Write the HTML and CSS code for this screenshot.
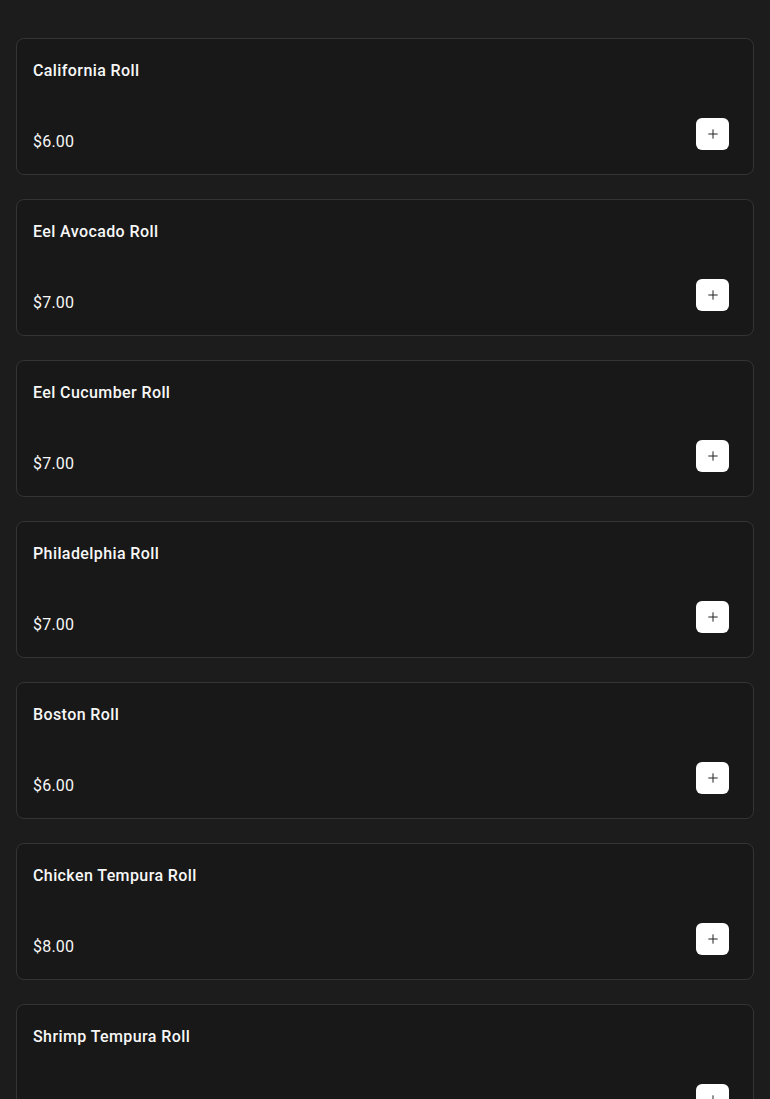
FILE: index.html
```html
<!DOCTYPE html>
<html lang="en">
<head>
  <meta charset="UTF-8" />
  <meta name="viewport" content="width=device-width, initial-scale=1.0" />
  <title>Menu</title>
  <link rel="stylesheet" href="styles.css">
</head>
<body>
  <div class="menu">
    <div class="card">
      <h3 class="name">California Roll</h3>
      <div class="bottom">
        <span class="price">$6.00</span>
        <button class="add"><svg viewBox="0 0 24 24"><path d="M5 12h14M12 5v14"/></svg></button>
      </div>
    </div>
    <div class="card">
      <h3 class="name">Eel Avocado Roll</h3>
      <div class="bottom">
        <span class="price">$7.00</span>
        <button class="add"><svg viewBox="0 0 24 24"><path d="M5 12h14M12 5v14"/></svg></button>
      </div>
    </div>
    <div class="card">
      <h3 class="name">Eel Cucumber Roll</h3>
      <div class="bottom">
        <span class="price">$7.00</span>
        <button class="add"><svg viewBox="0 0 24 24"><path d="M5 12h14M12 5v14"/></svg></button>
      </div>
    </div>
    <div class="card">
      <h3 class="name">Philadelphia Roll</h3>
      <div class="bottom">
        <span class="price">$7.00</span>
        <button class="add"><svg viewBox="0 0 24 24"><path d="M5 12h14M12 5v14"/></svg></button>
      </div>
    </div>
    <div class="card">
      <h3 class="name">Boston Roll</h3>
      <div class="bottom">
        <span class="price">$6.00</span>
        <button class="add"><svg viewBox="0 0 24 24"><path d="M5 12h14M12 5v14"/></svg></button>
      </div>
    </div>
    <div class="card">
      <h3 class="name">Chicken Tempura Roll</h3>
      <div class="bottom">
        <span class="price">$8.00</span>
        <button class="add"><svg viewBox="0 0 24 24"><path d="M5 12h14M12 5v14"/></svg></button>
      </div>
    </div>
    <div class="card">
      <h3 class="name">Shrimp Tempura Roll</h3>
      <div class="bottom">
        <span class="price">$9.00</span>
        <button class="add"><svg viewBox="0 0 24 24"><path d="M5 12h14M12 5v14"/></svg></button>
      </div>
    </div>
  </div>
</body>
</html>
```
FILE: styles.css
```css
body {
  margin: 0;
  font-family: Roboto, "Noto Sans", sans-serif;
  background-color: #1c1c1c;
  color: #f7f7f7;
}
.menu {
  display: flex;
  flex-direction: column;
  gap: 24px;
  padding: 38px 16px;
}
.card {
  background-color: #181818;
  border: 1px solid #343434;
  border-radius: 8px;
  padding: 20px 16px;
}
.name {
  margin: 0;
  font-size: 16px;
  font-weight: 500;
  line-height: 24px;
  letter-spacing: 0.4px;
}
.bottom {
  display: flex;
  justify-content: space-between;
  align-items: flex-end;
  margin-top: 35px;
}
.price {
  font-size: 16px;
  line-height: 24px;
  letter-spacing: 0.2px;
}
.add {
  width: 33px;
  height: 32px;
  margin-bottom: 4px;
  margin-right: 8px;
  padding: 0;
  border: none;
  border-radius: 6px;
  background-color: #fff;
  display: flex;
  align-items: center;
  justify-content: center;
  cursor: pointer;
}
.add svg {
  width: 16px;
  height: 16px;
  fill: none;
  stroke: #222;
  stroke-width: 1.5;
}
```
